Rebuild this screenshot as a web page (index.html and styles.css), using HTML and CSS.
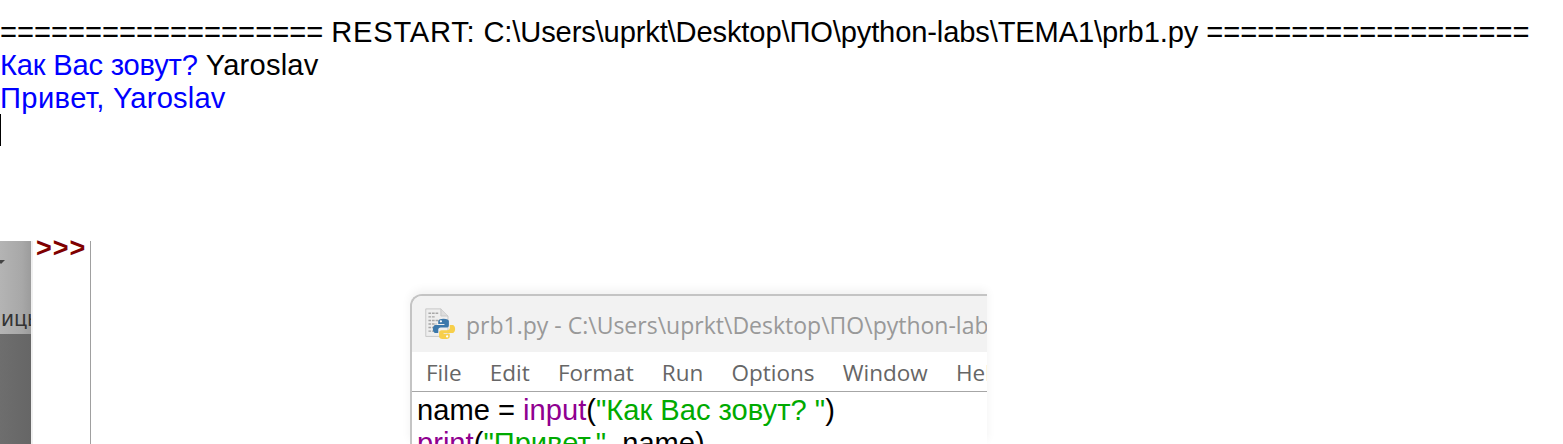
FILE: index.html
```html
<!DOCTYPE html>
<html lang="ru">
<head>
<meta charset="utf-8">
<title>IDLE Shell</title>
<link rel="stylesheet" href="styles.css">
</head>
<body>
<main class="stage">
  <section class="output">
    <div class="line">=================== <span class="restart">RESTART:</span> <span class="path">C:\Users\uprkt\Desktop\ПО\python-labs\TEMA1\prb1.py</span> ===================</div>
    <div class="line"><span class="stdout tight">Как Вас зовут?</span> <span class="latin">Yaroslav</span></div>
    <div class="line stdout"><span class="wide">Привет,</span> <span class="latin">Yaroslav</span></div>
    <div class="caret"></div>
  </section>

  <section class="backdrop">
    <div class="desktop">
      <div class="desktop-top"><span class="tick"></span><span class="cut-label">ицы</span></div>
      <div class="desktop-bottom"></div>
    </div>
    <div class="gutter"><span class="prompt">&gt;&gt;&gt;</span></div>
  </section>

  <section class="editor">
    <header class="titlebar">
      <svg class="file-icon" width="32" height="32" viewBox="0 0 36 36" aria-hidden="true">
        <path d="M2 1h17l8 8v23H2z" fill="#eeeeee" stroke="#c4c4c4"/>
        <path d="M19 1v8h8" fill="#dddddd" stroke="#c4c4c4"/>
        <path d="M5 6h11M5 10h8M5 14h15M5 18h9M5 22h10M5 26h11" stroke="#a8a8a8" stroke-width="1.6" stroke-dasharray="3 1"/>
        <path d="M22 12c-4 0-6 1-6 3v3h7v1h-10c-2 0-3 2-3 4.500s1 4.500 3 4.500h3v-3c0-2 1-3 3-3h6c2 0 3-1 3-3v-4c0-2-2-3-6-3z" fill="#3b78ab"/>
        <path d="M23 35c4 0 6-1 6-3v-3h-7v-1h10c2 0 3-2 3-4.500s-1-4.500-3-4.500h-3v3c0 2-1 3-3 3h-6c-2 0-3 1-3 3v4c0 2 2 3 6 3z" fill="#f7cf4a"/>
        <circle cx="19" cy="15" r="1.300" fill="#ffffff"/>
        <circle cx="26" cy="32" r="1.300" fill="#ffffff"/>
      </svg>
      <span class="title">prb1.py - C:\Users\uprkt\Desktop\ПО\python-labs\TEMA1\prb1.py (3.11.5)</span>
    </header>
    <nav class="menu">
      <span>File</span><span>Edit</span><span>Format</span><span>Run</span><span>Options</span><span>Window</span><span>Help</span>
    </nav>
    <div class="code">
      <div class="line">name = <span class="builtin">input</span>(<span class="string">"Как Вас зовут? "</span>)</div>
      <div class="line"><span class="builtin">print</span>(<span class="string">"Привет,"</span>, name)</div>
    </div>
  </section>
</main>
</body>
</html>
```

FILE: styles.css
```css
* { box-sizing: border-box; }

html, body {
  margin: 0;
  background: #ffffff;
}

.stage {
  position: relative;
  width: 1563px;
  height: 444px;
  overflow: hidden;
  background: #ffffff;
  font-family: "Liberation Sans", Arial, sans-serif;
  color: #000000;
}

.output {
  padding: 16px 0 0 0;
  font-size: 29.14px;
  line-height: 33px;
}

.line { white-space: pre; }
.stdout { color: #0000ff; }
.restart { letter-spacing: 0.75px; }
.path { letter-spacing: -0.14px; }
.tight { letter-spacing: -0.2px; }
.wide { letter-spacing: 0.4px; }
.latin { letter-spacing: 0.2px; }

.caret {
  width: 1px;
  height: 32px;
  margin-top: -1px;
  background: #000000;
}

.backdrop {
  position: absolute;
  left: 0;
  top: 241px;
  bottom: 0;
  display: flex;
}

.desktop {
  width: 31px;
  display: flex;
  flex-direction: column;
}

.desktop-top {
  position: relative;
  height: 93px;
  overflow: hidden;
  background: linear-gradient(90deg, #b4b4b4, #a8a8a8 70%, #9c9c9c);
}

.tick {
  position: absolute;
  left: -3px;
  top: 19px;
  width: 0;
  height: 0;
  border-left: 4px solid transparent;
  border-right: 4px solid transparent;
  border-top: 4px solid #444444;
}

.cut-label {
  position: absolute;
  left: 1px;
  top: 63px;
  font-family: "Noto Sans", sans-serif;
  font-size: 21px;
  line-height: 28px;
  color: #333333;
}

.desktop-bottom {
  flex: 1;
  background: linear-gradient(90deg, #6e6e6e, #666666);
}

.gutter {
  width: 60px;
  padding-left: 3px;
  background: #ffffff;
  border-left: 2px solid #f0f0f0;
  border-right: 1px solid #a0a0a0;
}

.prompt {
  display: block;
  color: #7f0000;
  font-size: 27px;
  font-weight: 700;
  line-height: 14px;
  letter-spacing: 1px;
}

.editor {
  position: absolute;
  left: 410px;
  top: 294px;
  width: 577px;
  height: 150px;
  overflow: hidden;
  background: #ffffff;
  border-top: 2px solid #c4c4c4;
  border-left: 2px solid #c4c4c4;
  border-top-left-radius: 12px;
  box-shadow: 0 -4px 10px rgba(0, 0, 0, 0.06);
}

.titlebar {
  display: flex;
  align-items: center;
  gap: 10px;
  height: 56px;
  padding-left: 12px;
  background: #f2f2f2;
  white-space: nowrap;
}

.file-icon { flex: none; }

.title {
  font-family: "Open Sans", sans-serif;
  font-size: 23px;
  color: #999999;
  padding-top: 2px;
}

.menu {
  display: flex;
  gap: 28.2px;
  align-items: center;
  height: 40px;
  padding: 2px 0 0 14px;
  font-family: "Open Sans", sans-serif;
  font-size: 22.500px;
  color: #666666;
  white-space: nowrap;
  border-bottom: 1px solid #a6a6a6;
}

.code {
  font-size: 29.14px;
  line-height: 33px;
  padding: 2px 0 0 5px;
}

.builtin { color: #900090; }
.string { color: #00aa00; }
```
